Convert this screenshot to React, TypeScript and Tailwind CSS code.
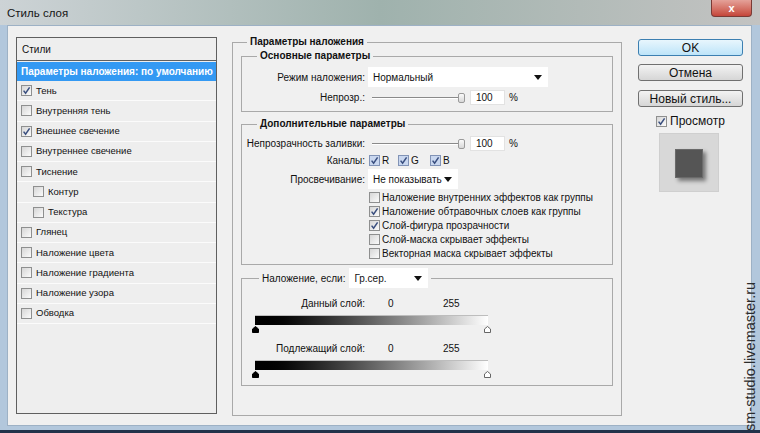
import React from 'react';

type StyleItem = { label: string; on?: boolean; sub?: boolean };

const STYLES: StyleItem[] = [
  { label: 'Тень', on: true },
  { label: 'Внутренняя тень' },
  { label: 'Внешнее свечение', on: true },
  { label: 'Внутреннее свечение' },
  { label: 'Тиснение' },
  { label: 'Контур', sub: true },
  { label: 'Текстура', sub: true },
  { label: 'Глянец' },
  { label: 'Наложение цвета' },
  { label: 'Наложение градиента' },
  { label: 'Наложение узора' },
  { label: 'Обводка' },
];

const OPTIONS: StyleItem[] = [
  { label: 'Наложение внутренних эффектов как группы' },
  { label: 'Наложение обтравочных слоев как группы', on: true },
  { label: 'Слой-фигура прозрачности', on: true },
  { label: 'Слой-маска скрывает эффекты' },
  { label: 'Векторная маска скрывает эффекты' },
];

// Win7-style checkbox
const Check = ({ on, tint }: { on?: boolean; tint?: boolean }) => (
  <span
    className={
      tint
        ? 'flex h-[11px] w-[11px] shrink-0 items-center justify-center border border-[#8193b6] bg-[#c9d7ef]'
        : 'flex h-[11px] w-[11px] shrink-0 items-center justify-center border border-[#8e8f8f] bg-linear-to-br from-[#d6d6d6] to-[#fbfbfb]'
    }
  >
    {on && (
      <svg width="9" height="9" viewBox="0 0 9 9">
        <path d="M1.6 4.6 L3.6 7.2 L7.6 1.4" fill="none" stroke="#394e7e" strokeWidth="1.5" />
      </svg>
    )}
  </span>
);

const Arrow = () => (
  <svg width="8" height="5" viewBox="0 0 8 5">
    <path d="M0 0 H8 L4 5 Z" fill="#111" />
  </svg>
);

const Select = ({ value, width }: { value: string; width: string }) => (
  <div className={`flex h-[20px] items-center justify-between whitespace-nowrap bg-white pl-[5px] pr-[6px] ${width}`}>
    <span>{value}</span>
    <Arrow />
  </div>
);

const Slider = () => (
  <div className="ml-[4px] flex items-center">
    <div className="h-[2px] w-[88px] border-t border-[#8a8a8a] bg-white" />
    <div className="-ml-[2px] h-[10px] w-[7px] rounded-[2px] border border-[#9a9a9a] bg-linear-to-b from-[#fafafa] to-[#d8d8d8]" />
  </div>
);

const NumBox = ({ value }: { value: string }) => (
  <>
    <div className="ml-[5px] flex h-[15px] w-[35px] items-center border border-[#e2e2e2] bg-white pl-[5px]">{value}</div>
    <span className="ml-[4px]">%</span>
  </>
);

const Marker = ({ dark }: { dark?: boolean }) => (
  <svg width="7" height="7" viewBox="0 0 7 7">
    <path d="M3.5 0.5 L6.5 3 V6.5 H0.5 V3 Z" fill={dark ? '#000' : '#fff'} stroke={dark ? '#000' : '#666'} strokeWidth="1" />
  </svg>
);

const GradientBar = () => (
  <>
    <div className="ml-[13px] mt-[5px] h-[10px] w-[233px] border-t border-[#bdbdbd] bg-linear-to-r from-[#000] to-[#fff]" />
    <div className="ml-[10px] mt-[1px] flex h-[7px] w-[239px] justify-between">
      <Marker dark />
      <Marker />
    </div>
  </>
);

export default function App() {
  return (
    <div className="relative flex h-[433px] w-[760px] flex-col overflow-hidden border-b-[3px] border-[#22324a] bg-[#b2c7dc] font-['Liberation_Sans',Arial,sans-serif] text-[10px] text-[#111]">
      {/* title bar (glass) */}
      <div className="flex h-[25px] shrink-0 items-start justify-between bg-linear-to-r from-[#cdd3d6] via-[#9fb2ad] to-[#c3c3c2] pl-[7px] pr-[8px]">
        <span className="mt-[5px] text-[11.5px] text-[#151515]">Стиль слоя</span>
        <div className="flex h-[17px] w-[41px] items-center justify-center rounded-b-[4px] border border-t-0 border-[#7a3a35] bg-linear-to-b from-[#e4a199] to-[#c4453a] text-[11px] font-bold text-white">
          x
        </div>
      </div>

      {/* window body */}
      <div className="flex min-h-0 flex-1 pb-[4px] pl-[7px] pr-[8px]">
        <div className="flex flex-1 items-start border border-[#9db1c5] bg-[#f0f0f0]">
          {/* styles list */}
          <div className="ml-[8px] mt-[11px] h-[377px] w-[201px] border border-[#5f5f5f] bg-[#eeeeee] text-[9.5px]">
            <div className="flex h-[23px] items-center border-b border-[#5f5f5f] pl-[5px] text-[10px] text-[#111]">Стили</div>
            <div className="mt-[1px] flex h-[19px] items-center overflow-hidden whitespace-nowrap bg-[#3399f3] pl-[4px] text-[10px] font-bold text-white">
              Параметры наложения: по умолчанию
            </div>
            {STYLES.map((s) => (
              <div
                key={s.label}
                className={`flex h-[20.25px] items-center gap-[4px] border-b border-[#fbfbfb] ${s.sub ? 'pl-[16px]' : 'pl-[4px]'}`}
              >
                <Check on={s.on} />
                <span>{s.label}</span>
              </div>
            ))}
          </div>

          {/* blending options */}
          <fieldset className="ml-[15px] mt-[9px] h-[381px] w-[390px] border border-[#a9a9a9]">
            <legend className="ml-[14px] px-[3px] font-bold leading-[14px]">Параметры наложения</legend>
            <div className="px-[8px]">
              <fieldset className="h-[63px] border border-[#a9a9a9]">
                <legend className="ml-[15px] px-[3px] font-bold leading-[14px]">Основные параметры</legend>
                <div className="mt-[4px] flex h-[20px] items-center">
                  <span className="w-[123px] whitespace-nowrap text-right">Режим наложения:</span>
                  <div className="ml-[3px]">
                    <Select value="Нормальный" width="w-[180px]" />
                  </div>
                </div>
                <div className="mt-[3px] flex h-[15px] items-center">
                  <span className="w-[123px] whitespace-nowrap text-right">Непрозр.:</span>
                  <div className="ml-[3px] flex items-center">
                    <Slider />
                    <NumBox value="100" />
                  </div>
                </div>
              </fieldset>

              <fieldset className="mt-[5px] h-[148px] border border-[#a9a9a9]">
                <legend className="ml-[15px] px-[3px] font-bold leading-[14px]">Дополнительные параметры</legend>
                <div className="mt-[5px] flex h-[15px] items-center">
                  <span className="w-[123px] whitespace-nowrap text-right">Непрозрачность заливки:</span>
                  <div className="ml-[3px] flex items-center">
                    <Slider />
                    <NumBox value="100" />
                  </div>
                </div>
                <div className="mt-[2px] flex h-[14px] items-center">
                  <span className="w-[123px] text-right">Каналы:</span>
                  <div className="ml-[4px] flex items-center">
                    <Check on tint />
                    <span className="ml-[2px] w-[16px]">R</span>
                    <Check on tint />
                    <span className="ml-[2px] w-[19px]">G</span>
                    <Check on tint />
                    <span className="ml-[2px]">B</span>
                  </div>
                </div>
                <div className="mt-[2px] flex h-[20px] items-center">
                  <span className="w-[123px] text-right">Просвечивание:</span>
                  <div className="ml-[3px]">
                    <Select value="Не показывать" width="w-[90px]" />
                  </div>
                </div>
                <div className="ml-[127px] mt-[1px] flex flex-col">
                  {OPTIONS.map((o) => (
                    <div key={o.label} className="flex h-[14px] items-center gap-[2px] whitespace-nowrap">
                      <Check on={o.on} />
                      <span>{o.label}</span>
                    </div>
                  ))}
                </div>
              </fieldset>

              <fieldset className="mt-[3px] h-[118px] border border-[#a9a9a9]">
                <legend className="ml-[17px] flex items-center gap-[4px] px-[3px]">
                  <span>Наложение, если:</span>
                  <Select value="Гр.сер." width="w-[79px]" />
                </legend>
                <div className="mt-[8px] flex h-[14px] items-center">
                  <span className="w-[123px] text-right">Данный слой:</span>
                  <span className="ml-[23px] w-[55px]">0</span>
                  <span>255</span>
                </div>
                <GradientBar />
                <div className="mt-[8px] flex h-[14px] items-center">
                  <span className="w-[123px] whitespace-nowrap text-right">Подлежащий слой:</span>
                  <span className="ml-[23px] w-[55px]">0</span>
                  <span>255</span>
                </div>
                <GradientBar />
              </fieldset>
            </div>
          </fieldset>

          {/* buttons */}
          <div className="ml-[16px] mt-[13px] flex w-[105px] flex-col text-[12px]">
            <button className="flex h-[17px] items-center justify-center rounded-[3px] border border-[#3c7fb1] bg-linear-to-b from-[#e8f6fd] to-[#bde4f9] text-[#111]">
              OK
            </button>
            <button className="mt-[8px] flex h-[17px] items-center justify-center rounded-[3px] border border-[#707070] bg-linear-to-b from-[#f3f3f3] to-[#d6d6d6] text-[#111]">
              Отмена
            </button>
            <button className="mt-[9px] flex h-[17px] items-center justify-center rounded-[3px] border border-[#707070] bg-linear-to-b from-[#f3f3f3] to-[#d6d6d6] text-[#111]">
              Новый стиль...
            </button>
            <div className="ml-[18px] mt-[8px] flex h-[12px] items-center gap-[3px]">
              <Check on />
              <span>Просмотр</span>
            </div>
            <div className="ml-[21px] mt-[6px] h-[59px] w-[60px] border border-[#cfcfcf] bg-[#d8d8d8] pl-[15px] pt-[15px]">
              <div className="h-[29px] w-[28px] border border-[#6a6a6a] bg-[#555555] shadow-[3px_3px_4px_rgba(0,0,0,0.45)]" />
            </div>
          </div>
        </div>
      </div>

      {/* watermark on the right frame */}
      <div className="absolute left-[742px] top-[431px] origin-top-left -rotate-90 whitespace-nowrap text-[14.5px] leading-[16px] text-[#2b2b2b]">
        sm-studio.livemaster.ru
      </div>
    </div>
  );
}
